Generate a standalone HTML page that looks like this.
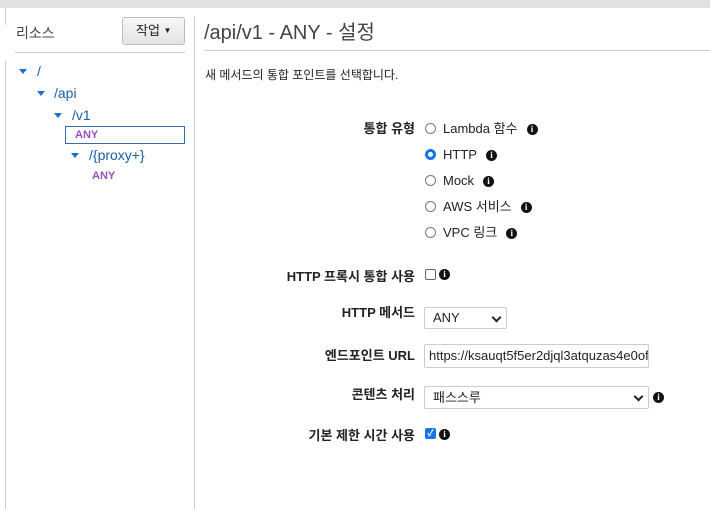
<!DOCTYPE html>
<html><head><meta charset="utf-8"><style>
*{box-sizing:border-box;margin:0;padding:0}
body{width:710px;height:509px;overflow:hidden;background:#fff;font-family:"Liberation Sans","Noto Sans CJK KR",sans-serif;color:#333;position:relative}
.a{position:absolute;white-space:nowrap}
.tri{position:absolute;width:0;height:0;border-left:4.5px solid transparent;border-right:4.5px solid transparent;border-top:5px solid #1f6fc5}
.lnk{color:#1a5fa8;font-size:14px}
.any{color:#9a4fbf;font-weight:bold;font-size:11px}
.lbl{position:absolute;right:295px;font-size:13px;line-height:16px;font-weight:bold;color:#222;white-space:nowrap}
.rad{position:absolute;left:425px;width:11px;height:11px;border:1px solid #777;border-radius:50%;background:#fff}
.opt{position:absolute;left:443px;font-size:13px;line-height:16px;color:#222;white-space:nowrap;display:flex;align-items:center}
.i{display:inline-block;width:11px;height:11px;border-radius:50%;background:#111;color:#fff;font:bold 9px/11px "Liberation Serif",serif;text-align:center}
.a>.i{display:block}
.opt .i{margin-left:9px}
.sel{position:absolute;border:1px solid #ccc;border-radius:2px;background:#fff;font-size:13px;color:#222;padding-left:8px}
.chev{position:absolute;right:6px;top:6px;width:7px;height:7px;border-right:2px solid #222;border-bottom:2px solid #222;transform:rotate(45deg)}
</style></head><body>
<div class="a" style="left:0;top:0;width:710px;height:8px;background:#e1e1e1"></div>
<div class="a" style="left:5px;top:8px;width:1px;height:17px;background:#ccc"></div>
<div class="a" style="left:5px;top:61px;width:1px;height:448px;background:#ccc"></div>
<div class="a" style="left:194px;top:16px;width:1px;height:493px;background:#ccc"></div>

<div class="a" style="left:16px;top:25px;font-size:14px;line-height:16px;color:#444">리소스</div>
<div class="a" style="left:122px;top:17px;width:63px;height:28px;border:1px solid #bbb;border-radius:3px;background:linear-gradient(#f7f7f7,#e4e4e4);font-size:13px;line-height:16px;color:#222;padding:5px 0 0 13px">작업 <span style="font-size:8px;vertical-align:2px">▼</span></div>
<div class="a" style="left:15px;top:52px;width:170px;height:1px;background:#ccc"></div>

<div class="tri" style="left:19px;top:69px"></div><div class="a lnk" style="left:37px;top:63px">/</div>
<div class="tri" style="left:37px;top:91px"></div><div class="a lnk" style="left:54px;top:85px">/api</div>
<div class="tri" style="left:54px;top:113px"></div><div class="a lnk" style="left:72px;top:107px">/v1</div>
<div class="a" style="left:65px;top:126px;width:120px;height:18px;border:1px solid #3d6c9e"></div>
<div class="a any" style="left:75px;top:129px">ANY</div>
<div class="tri" style="left:71px;top:153px"></div><div class="a lnk" style="left:89px;top:147px">/{proxy+}</div>
<div class="a any" style="left:92px;top:170px">ANY</div>

<div class="a" style="left:204px;top:21px;font-size:20px;line-height:24px;color:#444">/api/v1 - ANY - 설정</div>
<div class="a" style="left:204px;top:50px;width:506px;height:1px;background:#ccc"></div>
<div class="a" style="left:205px;top:68px;font-size:12px;line-height:15px;color:#222">새 메서드의 통합 포인트를 선택합니다.</div>

<div class="lbl" style="top:121px">통합 유형</div>
<div class="rad" style="top:123px"></div><div class="opt" style="top:121px">Lambda 함수<span class="i">i</span></div>
<div class="rad" style="top:149px;border:3px solid #1a73e8;box-shadow:inset 0 0 0 1.5px #fff"></div><div class="opt" style="top:147px">HTTP<span class="i">i</span></div>
<div class="rad" style="top:175px"></div><div class="opt" style="top:173px">Mock<span class="i">i</span></div>
<div class="rad" style="top:201px"></div><div class="opt" style="top:199px">AWS 서비스<span class="i">i</span></div>
<div class="rad" style="top:227px"></div><div class="opt" style="top:225px">VPC 링크<span class="i">i</span></div>

<div class="lbl" style="top:269px">HTTP 프록시 통합 사용</div>
<div class="a" style="left:425px;top:269px;width:11px;height:11px;border:1px solid #666;border-radius:2px"></div>
<div class="a" style="left:439px;top:269px"><span class="i">i</span></div>

<div class="lbl" style="top:305px">HTTP 메서드</div>
<div class="sel" style="left:424px;top:307px;width:83px;height:22px;line-height:20px">ANY<div class="chev"></div></div>

<div class="lbl" style="top:348px">엔드포인트 URL</div>
<div class="sel" style="left:424px;top:344px;width:225px;height:24px;line-height:22px;padding-left:4px;overflow:hidden;font-size:13px">https://ksauqt5f5er2djql3atquzas4e0of</div>

<div class="lbl" style="top:387px">콘텐츠 처리</div>
<div class="sel" style="left:424px;top:386px;width:225px;height:23px;line-height:21px">패스스루<div class="chev"></div></div>
<div class="a" style="left:653px;top:392px"><span class="i">i</span></div>

<div class="lbl" style="top:428px">기본 제한 시간 사용</div>
<div class="a" style="left:425px;top:428px;width:11px;height:11px;background:#1a73e8;border-radius:2px;color:#fff;font-size:9px;line-height:11px;text-align:center;font-weight:bold">✓</div>
<div class="a" style="left:439px;top:429px"><span class="i">i</span></div>
</body></html>
